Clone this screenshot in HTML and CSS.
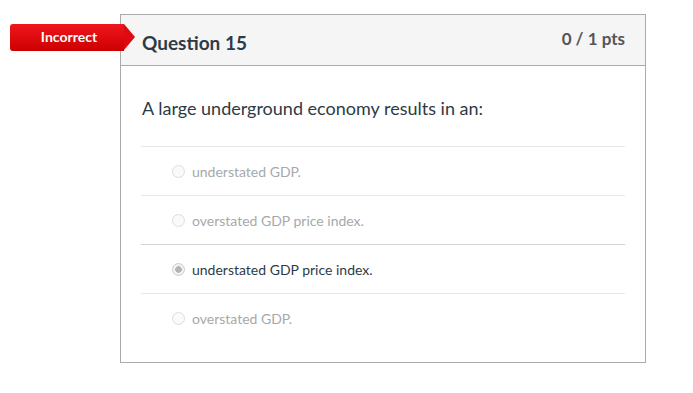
FILE: index.html
```html
<!DOCTYPE html>
<html lang="en">
<head>
    <meta charset="UTF-8">
    <meta name="viewport" content="width=device-width, initial-scale=1.0">
    <title>Quiz Results</title>
    <link rel="stylesheet" href="styles.css">
</head>
<body>
    <div id="wrap">
        <div class="flag">Incorrect</div>
        <div id="question">
            <div class="q-header">
                <h2>Question 15</h2>
                <span class="pts">0 / 1 pts</span>
            </div>
            <div class="q-body">
                <p class="q-text">A large underground economy results in an:</p>
                <!-- answers -->
                <div class="answer"><span class="radio"></span>understated GDP.</div>
                <div class="answer"><span class="radio"></span>overstated GDP price index.</div>
                <div class="answer selected"><span class="radio"></span>understated GDP price index.</div>
                <div class="answer"><span class="radio"></span>overstated GDP.</div>
            </div>
        </div>
    </div>
</body>
</html>
```

FILE: styles.css
```css
body {
    font-family: 'Lato', 'Liberation Sans', sans-serif;
    margin: 0;
    padding: 0;
    background: #fff;
    color: #2d3b45;
}
#wrap {
    position: relative;
    padding: 14px 0 0 120px;
}

/* red "Incorrect" flag */
.flag {
    position: absolute;
    left: 10px;
    top: 24px;
    width: 114px;
    height: 27px;
    line-height: 26px;
    padding-left: 4px;
    box-sizing: border-box;
    text-align: center;
    color: #fff;
    font-size: 14px;
    font-weight: bold;
    background: linear-gradient(#f0161e, #cc0000);
    border-radius: 3px 0 0 3px;
    z-index: 2;
}
.flag::after {
    content: "";
    position: absolute;
    right: -11px;
    top: 0;
    border-left: 11px solid #dd0a0f;
    border-top: 13.5px solid transparent;
    border-bottom: 13.5px solid transparent;
}

#question {
    width: 524px;
    border: 1px solid #aaa;
    background: #fff;
}
.q-header {
    display: flex;
    justify-content: space-between;
    align-items: flex-start;
    height: 50px;
    padding: 0 20px 0 21px;
    background: #f5f5f5;
    border-bottom: 1px solid #aaa;
}
.q-header h2 {
    margin: 0;
    padding-top: 16px;
    font-size: 19px;
    font-weight: bold;
    color: #2d3b45;
}
.pts {
    padding-top: 13px;
    font-size: 17px;
    font-weight: bold;
    color: #555;
}

.q-body {
    padding: 20px 20px 20px 20px;
}
.q-text {
    margin: 0 0 0 1px;
    height: 60px;
    font-size: 18px;
    line-height: 24px;
    padding-top: 10px;
    box-sizing: border-box;
    color: #2d3b45;
}
.answer {
    display: flex;
    align-items: center;
    padding: 1px 0 0 31px;
    box-sizing: content-box;
    height: 47px;
    border-top: 1px solid #e8e8e8;
    font-size: 14px;
    color: #a5a9ab;
}
.answer.selected {
    color: #2d3b45;
    border-top-color: #d4d4d4;
}
.radio {
    width: 11px;
    height: 11px;
    margin-right: 7px;
    border: 1px solid #ddd;
    border-radius: 50%;
    background: #fafafa;
    box-sizing: content-box;
}
.selected .radio {
    background: radial-gradient(circle, #b4b4b4 0, #b4b4b4 3px, #f2f2f2 3.5px);
    border-color: #ccc;
}
```
